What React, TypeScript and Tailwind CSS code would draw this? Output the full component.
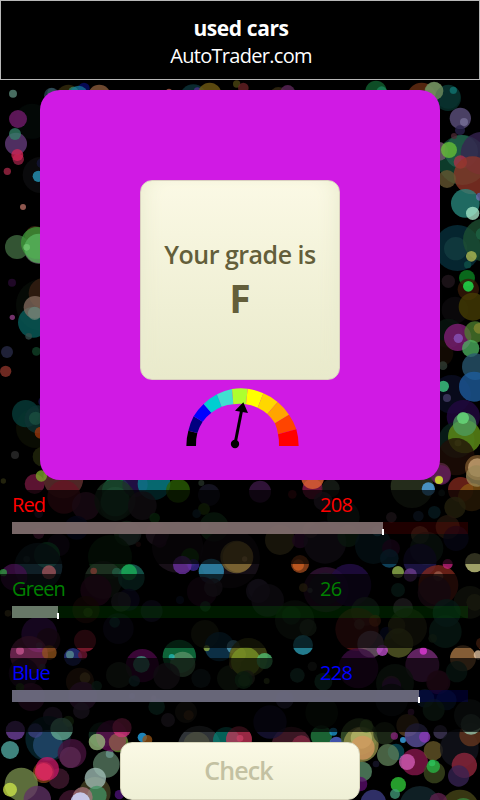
type Dot = [number, number, number, string];

type Cluster = { x: number; y: number; dots: Dot[] };

// Bokeh dots, grouped by page area. Dot units are a third of a pixel.
const clusters: Cluster[] = [
  {
    x: 0,
    y: 0,
    dots: [
      [155, 277, 13, '#3e6868'], [205, 290, 36, '#2b240b'], [252, 265, 17, '#070a55'], [220, 275, 15, '#276a50'],
      [236, 285, 28, '#125f78'], [298, 288, 34, '#704a30'], [507, 275, 9, '#8b4a3c'], [580, 295, 42, '#0b2b30'],
      [592, 272, 10, '#3f2470'], [629, 283, 35, '#5c4a10'], [710, 252, 11, '#3e3a0f'], [730, 264, 16, '#531a1e'],
      [835, 285, 24, '#2d2410'], [863, 277, 22, '#4c1f4a'], [1128, 274, 32, '#0e4f27'], [1145, 275, 16, '#166a4a'],
      [1265, 292, 44, '#552610'], [1345, 290, 36, '#062c28'], [1303, 273, 27, '#5f7d50'], [1360, 271, 9, '#1e7470'],
    ],
  },
  {
    x: 0,
    y: 80,
    dots: [
      [96, 124, 53, '#030807'], [155, 46, 23, '#223640'], [39, 41, 12, '#497064'], [54, 117, 27, '#5d1658'],
      [48, 191, 33, '#513064'], [45, 162, 18, '#276551'], [55, 238, 17, '#7b1a38'], [52, 225, 18, '#a41d42'],
      [22, 274, 11, '#832039'], [122, 285, 54, '#0b0b0c'], [125, 250, 15, '#10102c'], [115, 289, 17, '#217c98'],
      [69, 381, 9, '#925a50'], [105, 468, 30, '#3a2512'], [117, 507, 45, '#4c4a4e'], [51, 501, 36, '#355735'],
      [111, 489, 48, '#2f792d'], [117, 505, 44, '#438b47'], [80, 502, 10, '#599c59'], [36, 608, 12, '#200827'],
      [126, 675, 78, '#060a07'], [132, 640, 46, '#2b190e'], [100, 727, 46, '#074c4b'], [105, 682, 34, '#67544a'],
      [104, 700, 20, '#52655d'], [37, 712, 8, '#76336d'], [86, 769, 10, '#293c3b'], [21, 816, 18, '#202238'],
      [109, 814, 13, '#0d3420'], [130, 965, 15, '#16103d'], [17, 874, 17, '#702a22'], [108, 1044, 60, '#0b0c03'],
      [77, 1001, 41, '#05302e'], [115, 1018, 42, '#0b2828'], [107, 1015, 20, '#153e32'], [122, 1058, 18, '#7a2a0b'],
      [45, 1125, 12, '#242424'], [128, 1130, 30, '#1b2009'],
    ],
  },
  {
    x: 430,
    y: 80,
    dots: [
      [54, 54, 39, '#062824'], [12, 33, 28, '#566c48'], [70, 31, 11, '#0c5957'], [91, 115, 32, '#4c4266'],
      [102, 126, 12, '#5f5979'], [90, 151, 15, '#201b3b'], [97, 240, 75, '#0d3d2c'], [25, 214, 29, '#5e4658'],
      [94, 215, 50, '#1c4c3c'], [156, 220, 64, '#2b1c40'], [57, 210, 24, '#51982a'], [72, 168, 9, '#3d2129'],
      [91, 246, 20, '#8a2538'], [128, 286, 57, '#722b20'], [51, 297, 27, '#514427'], [106, 370, 43, '#206c64'],
      [150, 350, 12, '#5a588b'], [128, 400, 20, '#86b9a1'], [82, 504, 69, '#052630'], [77, 506, 35, '#102f33'],
      [163, 480, 64, '#183f27'], [155, 462, 18, '#174f36'], [124, 529, 16, '#8e9442'], [113, 554, 11, '#0c413a'],
      [111, 594, 24, '#096a1c'], [55, 604, 20, '#1a1117'], [115, 628, 32, '#2b1507'], [115, 619, 16, '#18bc40'],
      [75, 690, 40, '#0a080a'], [128, 680, 42, '#393103'], [55, 760, 44, '#07110c'], [30, 820, 40, '#120b02'],
      [83, 772, 41, '#68185e'], [135, 756, 32, '#3c6424'], [147, 745, 16, '#686925'], [85, 775, 14, '#6b4394'],
      [122, 805, 26, '#3c8c4c'], [136, 860, 40, '#204458'], [39, 857, 13, '#263129'], [65, 943, 58, '#080a1b'],
      [132, 920, 45, '#184a7d'], [40, 919, 17, '#33a66b'], [51, 954, 12, '#363052'], [100, 1010, 50, '#1b0733'],
      [80, 1080, 54, '#081b16'], [104, 1070, 50, '#4f7513'], [104, 1033, 35, '#3d7a4a'], [99, 1014, 18, '#53af62'],
      [84, 1089, 10, '#61852a'], [78, 1130, 56, '#190b05'], [30, 1180, 32, '#472133'], [143, 1163, 38, '#624624'],
      [142, 1163, 28, '#9c815c'], [26, 1199, 13, '#9bb41b'],
    ],
  },
  {
    x: 0,
    y: 475,
    dots: [
      [10, 18, 8, '#23230d'], [104, 27, 30, '#5d1432'], [190, 10, 60, '#502728'], [192, 66, 50, '#50101c'],
      [124, 3, 17, '#628320'], [348, 48, 42, '#096b3c'], [345, 92, 45, '#10362a'], [346, 80, 44, '#1b7851'],
      [405, 28, 38, '#211044'], [462, 26, 49, '#076b73'], [534, 47, 36, '#224c03'], [258, 93, 42, '#431a33'],
      [345, 75, 62, '#162a1b'], [427, 92, 43, '#2a202a'], [116, 116, 13, '#2b1a36'], [604, 24, 9, '#1e2820'],
      [627, 60, 33, '#14121f'], [612, 102, 18, '#26450d'], [590, 116, 13, '#102834'], [464, 129, 16, '#13531a'],
      [642, 156, 44, '#173f20'], [614, 153, 12, '#35604c'], [116, 175, 17, '#6b2851'], [230, 158, 36, '#090e34'],
      [380, 175, 38, '#24452b'], [390, 176, 34, '#354746'], [472, 176, 35, '#4b3048'], [480, 198, 20, '#500c4a'],
      [330, 246, 66, '#0b2710'], [533, 216, 77, '#181018'], [175, 210, 34, '#190c20'], [141, 240, 39, '#115d33'],
      [80, 253, 10, '#334b47'], [570, 246, 27, '#11400d'], [415, 208, 8, '#351515'], [690, 250, 90, '#150f16'],
      [714, 246, 46, '#76502b'], [115, 275, 72, '#102028'], [42, 306, 40, '#350c3b'], [10, 293, 11, '#277b35'],
      [147, 292, 21, '#824347'], [310, 315, 57, '#1c271d'], [281, 288, 10, '#642e28'], [394, 308, 40, '#125047'],
      [387, 292, 24, '#158c45'], [350, 292, 14, '#1a4a36'], [580, 270, 18, '#2e2076'], [547, 270, 28, '#572782'],
      [634, 289, 38, '#297999'],
    ],
  },
  {
    x: 240,
    y: 475,
    dots: [
      [60, 50, 33, '#301438'], [218, 42, 31, '#6f153b'], [218, 8, 34, '#b45329'], [272, 40, 27, '#141914'],
      [516, 35, 64, '#252d1b'], [565, 42, 20, '#438ac0'], [662, 44, 38, '#652017'], [603, 0, 30, '#4b1646'],
      [597, 15, 12, '#a9be1e'], [696, 67, 42, '#6c450f'], [710, 3, 32, '#796a45'], [605, 54, 10, '#182525'],
      [645, 97, 32, '#5c5622'], [583, 112, 19, '#124655'], [535, 123, 16, '#192942'], [454, 127, 16, '#44313c'],
      [157, 58, 13, '#430a13'], [249, 78, 28, '#312533'], [310, 126, 49, '#17251d'], [120, 195, 45, '#504623'],
      [212, 165, 24, '#654e34'], [180, 196, 24, '#441344'], [255, 202, 64, '#261c2f'], [325, 183, 33, '#173c22'],
      [400, 212, 55, '#0c2b36'], [412, 168, 16, '#225a6a'], [453, 220, 27, '#350b33'], [540, 180, 27, '#4d4a32'],
      [560, 220, 50, '#182a22'], [623, 156, 36, '#5b391f'], [648, 190, 38, '#101030'], [-10, 246, 49, '#5f5027'],
      [14, 252, 8, '#8c7043'], [180, 267, 27, '#803b18'], [175, 270, 17, '#a14b1a'], [258, 344, 68, '#29102b'],
      [330, 330, 64, '#1b0b39'], [448, 250, 28, '#0e405b'], [540, 256, 50, '#1a1440'], [595, 330, 60, '#662017'],
      [474, 291, 18, '#799542'], [511, 300, 20, '#5a3271'], [623, 267, 15, '#9c1c64'], [704, 263, 29, '#a4a66b'],
      [595, 304, 15, '#77493b'], [55, 342, 31, '#281a36'],
    ],
  },
  {
    x: 0,
    y: 565,
    dots: [
      [288, 76, 47, '#3b0d2a'], [386, 104, 33, '#120e36'], [363, 110, 30, '#2b2c31'], [258, 134, 41, '#2b100b'],
      [264, 142, 14, '#3e3217'], [606, 80, 45, '#230b22'], [640, 68, 28, '#2a222d'], [455, 138, 33, '#1a1630'],
      [540, 105, 12, '#0d182d'], [616, 124, 16, '#1b3629'], [24, 145, 10, '#4a4122'], [355, 191, 46, '#130f25'],
      [344, 172, 16, '#123839'], [118, 208, 54, '#4a1767'], [145, 225, 36, '#321224'], [118, 242, 10, '#326a87'],
      [255, 227, 33, '#78192a'], [615, 207, 42, '#202412'], [658, 245, 44, '#0c3147'], [87, 270, 57, '#69244c'],
      [60, 257, 12, '#9d4571'], [148, 263, 22, '#714015'], [219, 276, 27, '#222a6a'], [210, 269, 12, '#467371'],
      [248, 270, 14, '#581126'], [427, 302, 50, '#3b0737'], [424, 298, 25, '#337461'], [538, 274, 50, '#0f673a'],
      [548, 298, 38, '#487351'], [515, 276, 9, '#1d9392'], [620, 250, 9, '#799138'], [700, 245, 20, '#468193'],
      [714, 268, 24, '#9a9a20'], [240, 350, 42, '#382213'], [255, 338, 16, '#64502b'], [357, 330, 39, '#1e261e'],
      [403, 348, 17, '#183c3e'], [500, 333, 40, '#29202a'], [603, 340, 29, '#141f23'], [690, 340, 39, '#1b2919'],
      [705, 297, 18, '#594520'], [71, 325, 45, '#210c27'], [127, 306, 10, '#3b334e'],
    ],
  },
  {
    x: 240,
    y: 565,
    dots: [
      [54, 78, 36, '#2b2337'], [83, 106, 49, '#231b2a'], [255, 72, 49, '#161720'], [190, 68, 13, '#56421c'],
      [210, 76, 8, '#34383c'], [474, 75, 21, '#144034'], [583, 82, 50, '#331628'], [690, 112, 49, '#292f1c'],
      [704, 112, 25, '#424322'], [154, 151, 28, '#154a28'], [164, 165, 59, '#162216'], [204, 188, 26, '#243523'],
      [376, 139, 43, '#22352a'], [489, 129, 30, '#4c454c'], [351, 193, 65, '#521516'], [405, 167, 18, '#6a2e18'],
      [358, 178, 16, '#482d28'], [470, 181, 26, '#555c20'], [440, 205, 20, '#0c143c'], [616, 200, 49, '#143e31'],
      [620, 144, 42, '#143f38'], [578, 220, 13, '#243f27'], [503, 188, 58, '#2b2916'], [392, 237, 40, '#5d4a59'],
      [476, 234, 44, '#474b20'], [427, 256, 17, '#963ca1'], [189, 240, 30, '#247e91'], [25, 277, 58, '#3a3c13'],
      [17, 290, 44, '#60751e'], [74, 288, 24, '#40995c'], [355, 310, 60, '#2d0932'], [547, 300, 51, '#622463'],
      [550, 258, 11, '#b32eac'], [669, 280, 39, '#876037'], [715, 270, 14, '#b49b81'], [725, 235, 17, '#9e4a25'],
      [172, 331, 22, '#1a3e36'], [217, 304, 14, '#20251f'], [22, 339, 23, '#37382a'], [80, 348, 9, '#35431e'],
      [250, 350, 27, '#164230'], [465, 354, 57, '#19291d'], [454, 360, 28, '#43253c'], [595, 352, 36, '#461330'],
      [650, 320, 32, '#14352b'],
    ],
  },
  {
    x: 0,
    y: 680,
    dots: [
      [93, 51, 42, '#421337'], [60, 22, 13, '#223b18'], [248, 48, 43, '#491f4c'], [290, 18, 16, '#163a2c'],
      [396, 48, 9, '#56506b'], [470, 80, 25, '#124637'], [461, 54, 8, '#81553a'], [504, 120, 21, '#342b38'],
      [558, 96, 33, '#1f1d16'], [566, 106, 15, '#442c18'], [244, 92, 25, '#3d2d46'], [158, 109, 29, '#332440'],
      [205, 124, 17, '#28491a'], [144, 176, 68, '#061f28'], [144, 195, 45, '#1c3b58'], [185, 147, 34, '#508672'],
      [106, 152, 22, '#303468'], [46, 151, 29, '#5a357d'], [30, 210, 27, '#418681'], [216, 220, 43, '#380e30'],
      [211, 232, 32, '#482142'], [177, 296, 31, '#351526'], [131, 277, 32, '#683411'], [142, 266, 35, '#9a124f'],
      [131, 276, 27, '#af2449'], [64, 313, 50, '#5e703c'], [30, 329, 21, '#a1b43a'], [112, 358, 41, '#4b284f'],
      [285, 338, 47, '#37351c'], [319, 253, 40, '#46614e'], [329, 222, 12, '#557971'], [286, 295, 32, '#809790'],
      [291, 346, 29, '#34734c'], [215, 370, 40, '#341126'], [248, 351, 30, '#835b5f'], [241, 366, 29, '#a9b5d5'],
      [358, 344, 14, '#3e0e60'], [304, 165, 38, '#0e281d'], [335, 168, 47, '#4d0a42'], [291, 186, 25, '#799563'],
      [356, 188, 29, '#4d7025'], [352, 186, 26, '#6f3541'], [366, 143, 29, '#a42960'], [427, 172, 14, '#1e87bd'],
      [442, 180, 15, '#744010'], [598, 202, 65, '#303439'], [590, 195, 40, '#3c3e32'], [679, 181, 40, '#05645b'],
      [720, 175, 10, '#a64d70'],
    ],
  },
  {
    x: 240,
    y: 680,
    dots: [
      [12, 2, 18, '#42642a'], [11, 0, 27, '#174522'], [-3, 178, 39, '#9b2944'], [154, 200, 60, '#3c1825'],
      [184, 195, 29, '#662033'], [90, 126, 50, '#12102c'], [134, 59, 27, '#2a2640'], [244, 168, 32, '#1c6534'],
      [280, 155, 12, '#1778a5'], [289, 191, 21, '#4254ad'], [357, 170, 55, '#314725'], [363, 193, 53, '#77753d'],
      [364, 174, 32, '#919054'], [368, 203, 36, '#a67649'], [379, 138, 20, '#42602a'], [455, 22, 29, '#3a174b'],
      [594, 4, 32, '#42132c'], [434, 160, 34, '#1b2716'], [468, 216, 25, '#063b47'], [463, 168, 11, '#6a1b61'],
      [444, 225, 33, '#496444'], [366, 275, 30, '#487154'], [360, 312, 22, '#480b55'], [400, 367, 38, '#303169'],
      [489, 180, 9, '#308abe'], [503, 136, 34, '#49361c'], [530, 166, 36, '#4a427f'], [554, 171, 17, '#702c92'],
      [524, 246, 40, '#6d123c'], [501, 246, 24, '#a64991'], [580, 212, 29, '#524520'], [601, 156, 21, '#342d48'],
      [583, 278, 32, '#303a19'], [580, 259, 20, '#209137'], [576, 249, 10, '#249948'], [475, 314, 23, '#28a02d'],
      [465, 342, 15, '#33795f'], [408, 252, 10, '#131122'], [658, 205, 58, '#0e1017'], [673, 256, 38, '#751f30'],
      [656, 288, 32, '#2c1b42'], [540, 380, 62, '#102025'], [660, 386, 57, '#393713'], [670, 390, 36, '#2d6c32'],
      [595, 365, 27, '#4c1a3e'], [693, 164, 35, '#522b18'], [693, 133, 31, '#759e8a'], [690, 106, 48, '#192120'],
      [619, 60, 31, '#0b203b'], [555, 55, 28, '#112d4b'], [513, 96, 10, '#4b1b49'], [581, 90, 33, '#193523'],
      [245, 98, 49, '#0d170d'], [455, 60, 49, '#0e1417'],
    ],
  },
];

function Bokeh() {
  return (
    <svg className="absolute inset-0 h-[800px] w-[480px] brightness-[1.28]" viewBox="0 0 480 800" aria-hidden="true">
      {clusters.map((c, i) => (
        <g key={i} transform={`translate(${c.x} ${c.y}) scale(${1 / 3})`}>
          {c.dots.map(([cx, cy, r, fill], k) => (
            <circle key={k} cx={cx} cy={cy} r={r} fill={fill} fillOpacity={0.76} />
          ))}
        </g>
      ))}
    </svg>
  );
}

const outer = [[49, 213], [55, 167], [71, 124], [101, 87], [141, 58], [186, 42], [233, 41], [280, 55], [323, 81], [357, 119], [379, 163], [386, 213]];
const inner = [[78, 213], [82, 174], [98, 140], [124, 113], [155, 95], [190, 88], [228, 88], [263, 98], [292, 117], [315, 145], [324, 178], [327, 213]];
const gaugeColors = ['#000000', '#000080', '#0000ff', '#00ced1', '#40e0d0', '#adff2f', '#ffff00', '#ffd700', '#ffa500', '#ff4500', '#ff0000'];

function Gauge() {
  return (
    <svg className="mt-[-5px] ml-[30px] h-20 w-[140px]" viewBox="0 0 420 240" aria-hidden="true">
      {gaugeColors.map((color, i) => (
        <path
          key={color}
          d={`M${outer[i]} A169 171 0 0 1 ${outer[i + 1]} L${inner[i + 1]} A124 127 0 0 0 ${inner[i]} Z`}
          fill={color}
        />
      ))}
      <path d="M195 207 215 105" stroke="black" strokeWidth="9" />
      <path d="M220 82 234 114 195 107Z" fill="black" />
      <circle cx="195" cy="207" r="12.5" fill="black" />
    </svg>
  );
}

type ChannelProps = {
  name: string;
  value: number;
  fill: number;
  text: string;
  track: string;
  bar: string;
};

function Channel({ name, value, fill, text, track, bar }: ChannelProps) {
  return (
    <section className="h-[74px] bg-black/70 px-3">
      <div className={`flex h-8 text-[20px] leading-[30px] ${text}`}>
        <span className="w-[308px] tracking-[-0.9px]">{name}</span>
        <span className="tracking-[-0.7px]">{value}</span>
      </div>
      <div className={`flex h-3 ${track}`}>
        <div className={`h-3 ${bar}`} style={{ width: fill }} />
        <div className="-ml-px mt-[7px] h-1.5 w-0.5 bg-white" />
      </div>
    </section>
  );
}

const parchment = 'bg-linear-to-b from-[#fbf9e5] to-[#e9eacb]';

export default function App() {
  return (
    <div className="relative h-[800px] w-[480px] overflow-hidden bg-black font-['Open_Sans','Noto_Sans',sans-serif]">
      <Bokeh />
      <div className="relative flex h-full flex-col gap-[10px]">
        <header className="flex h-20 shrink-0 flex-col items-center border border-[#b8b8b8] bg-black pt-[13px] pl-[2px] text-[20px] leading-7 text-white">
          <b className="text-[21px] tracking-[-0.4px]">used cars</b>
          <span className="tracking-[-0.7px]">AutoTrader.com</span>
        </header>
        <main className="mx-10 h-[390px] shrink-0 rounded-[20px] bg-[#d01ae4] pt-[90px] pl-[100px]">
          <div
            className={`flex h-[200px] w-[200px] flex-col items-center rounded-xl border border-[#d9cfc0] pt-[53px] font-semibold text-[#635e3a] shadow-[inset_14px_0_20px_-12px_#e9ebcd,inset_-14px_0_20px_-12px_#e9ebcd] ${parchment}`}
          >
            <span className="text-[25px] leading-10 tracking-[-0.5px]">Your grade is</span>
            <span className="text-[39px] leading-[48px] font-bold">F</span>
          </div>
          <Gauge />
        </main>
        <Channel name="Red" value={208} fill={371} text="text-[#ff0000]" track="bg-[#ff0000]/12" bar="bg-[#7f6f6f]/92" />
        <Channel name="Green" value={26} fill={46} text="text-[#008000]" track="bg-[#008000]/20" bar="bg-[#708070]/92" />
        <Channel name="Blue" value={228} fill={407} text="text-[#0000ff]" track="bg-[#0000ff]/14" bar="bg-[#706f80]/92" />
        <button className="mx-auto h-[58px] w-60 shrink-0 rounded-xl border border-[#d8d6bc] bg-linear-to-b from-[#fbf9e5] to-[#eff0d6] pr-[3px] pb-0.5 text-[25px] leading-10 font-semibold tracking-[-0.9px] text-[#c3c1a2]">
          Check
        </button>
      </div>
    </div>
  );
}
